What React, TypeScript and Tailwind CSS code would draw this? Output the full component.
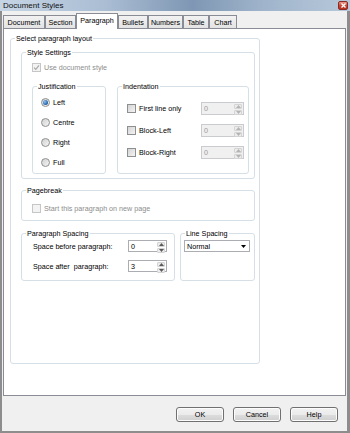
import type { ReactNode } from "react";

const Legend = ({ children }: { children: ReactNode }) => (
  <legend className="ml-[4px] px-[1px] leading-[9px] text-black">{children}</legend>
);

const CheckBox = ({ checked = false, disabled = false }: { checked?: boolean; disabled?: boolean }) => (
  <div
    className={`flex h-[9px] w-[9px] shrink-0 items-center justify-center border ${
      disabled
        ? "border-[#c6c6c6] bg-[#f3f3f3]"
        : "border-[#8e8f8f] bg-[linear-gradient(135deg,#d4d4d4,#f4f4f4)]"
    }`}
  >
    {checked && (
      <svg width="7" height="7" viewBox="0 0 7 7">
        <path d="M1 3.6 L2.8 5.4 L6 1.4" fill="none" stroke={disabled ? "#a8a8a8" : "#2a4a80"} strokeWidth="1.2" />
      </svg>
    )}
  </div>
);

const Radio = ({ checked = false }: { checked?: boolean }) => (
  <div className="flex h-[9px] w-[9px] shrink-0 items-center justify-center rounded-full border border-[#8e8f8f] bg-[linear-gradient(135deg,#d0d0d0,#f6f6f6)]">
    {checked && <div className="h-[5px] w-[5px] rounded-full bg-[radial-gradient(circle_at_35%_35%,#8fc0f0,#1f5fa8_70%)]" />}
  </div>
);

const Arrow = ({ up, color }: { up?: boolean; color: string }) => (
  <svg width="5" height="3" viewBox="0 0 5 3">
    <path d={up ? "M0 3 L2.5 0 L5 3 Z" : "M0 0 L5 0 L2.5 3 Z"} fill={color} />
  </svg>
);

const Spin = ({ value, disabled = false, className }: { value: string; disabled?: boolean; className: string }) => (
  <div
    className={`flex border ${className} ${
      disabled ? "border-[#c9cbcf] bg-[#f0f0f0] text-[#9a9a9a]" : "border-[#abadb3] bg-white text-black"
    }`}
  >
    <div className="flex flex-1 items-center pl-[2px]">{value}</div>
    <div className="m-[1px] flex w-[8px] flex-col gap-[1px]">
      <div className="flex flex-1 items-center justify-center rounded-[1px] border border-[#d4d4d4] bg-[#ececec]">
        <Arrow up color={disabled ? "#b4b4b4" : "#5a5a5a"} />
      </div>
      <div className="flex flex-1 items-center justify-center rounded-[1px] border border-[#d4d4d4] bg-[#ececec]">
        <Arrow color={disabled ? "#b4b4b4" : "#5a5a5a"} />
      </div>
    </div>
  </div>
);

const Button = ({ children }: { children: ReactNode }) => (
  <div className="flex h-[15px] w-[48px] items-center justify-center rounded-[3px] border border-[#707070] bg-[linear-gradient(#f2f2f2_0%,#ebebeb_50%,#dddddd_51%,#cfcfcf_100%)] text-black shadow-[inset_0_0_0_1px_#fcfcfc]">
    {children}
  </div>
);

const tabs = [
  { name: "Document", w: "w-[42px]" },
  { name: "Section", w: "w-[31px]" },
  { name: "Paragraph", w: "w-[42px]", active: true },
  { name: "Bullets", w: "w-[30px]" },
  { name: "Numbers", w: "w-[35px]" },
  { name: "Table", w: "w-[26px]" },
  { name: "Chart", w: "w-[28px]" },
];

export default function App() {
  return (
    <div className="flex h-[433px] w-[350px] flex-col overflow-hidden bg-[#f0f0f0] font-['Liberation_Sans',Arial,sans-serif] text-[7.2px] leading-[9px] text-black">
      {/* Title bar */}
      <div className="flex h-[11px] items-center justify-between bg-[linear-gradient(90deg,#c6d5e5_0%,#aabdd3_30%,#7f97b4_55%,#9fb4cb_75%,#b7c8da_100%)] pl-[3px] pr-[2px]">
        <span className="text-[8px] leading-[10px] text-[#111]">Document Styles</span>
        <div className="flex h-[9px] w-[10px] items-center justify-center rounded-[2px] border border-[#8a2a20] bg-[linear-gradient(#e89a8a,#c74a38_50%,#b8321f)]">
          <svg width="5" height="5" viewBox="0 0 5 5">
            <path d="M0.5 0.5 L4.5 4.5 M4.5 0.5 L0.5 4.5" stroke="#fff" strokeWidth="1.3" />
          </svg>
        </div>
      </div>

      <div className="flex flex-1 flex-col border-b-2 border-l-2 border-r-[3px] border-[#8d8d8d]">
        {/* Tabs */}
        <div className="flex h-[17px] items-end pl-[1px]">
          {tabs.map((t) =>
            t.active ? (
              <div
                key={t.name}
                className={`relative z-10 -mb-px flex h-[16px] ${t.w} items-start justify-center border border-b-0 border-[#898c95] bg-white pt-[2px]`}
              >
                {t.name}
              </div>
            ) : (
              <div
                key={t.name}
                className={`flex h-[13px] ${t.w} items-center justify-center border border-b-0 border-[#898c95] bg-[linear-gradient(#f2f2f2,#e3e3e3)]`}
              >
                {t.name}
              </div>
            )
          )}
        </div>

        {/* Panel */}
        <div className="mx-[1px] h-[368px] border border-[#898c95] bg-white">
          <fieldset className="ml-[6px] mt-[5px] h-[330px] w-[250px] rounded-[3px] border border-[#d5dfe5]">
            <Legend>Select paragraph layout</Legend>

            <fieldset className="ml-[10px] mt-[5px] h-[131px] w-[234px] rounded-[3px] border border-[#d5dfe5]">
              <Legend>Style Settings</Legend>
              <div className="ml-[10px] mt-[6px] flex h-[9px] items-center gap-[3px] text-[#8d8d8d]">
                <CheckBox checked disabled />
                <span>Use document style</span>
              </div>

              <div className="ml-[10px] mt-[10px] flex gap-[11px]">
                <fieldset className="h-[92px] w-[74px] rounded-[3px] border border-[#d5dfe5]">
                  <Legend>Justification</Legend>
                  <div className="ml-[8px] mt-[7px] flex flex-col gap-[11px]">
                    {["Left", "Centre", "Right", "Full"].map((j, i) => (
                      <div key={j} className="flex h-[9px] items-center gap-[3px]">
                        <Radio checked={i === 0} />
                        <span>{j}</span>
                      </div>
                    ))}
                  </div>
                </fieldset>

                <fieldset className="h-[92px] w-[132px] rounded-[3px] border border-[#d5dfe5]">
                  <Legend>Indentation</Legend>
                  <div className="mt-[11px] flex flex-col gap-[9px] pl-[9px] pr-[4px]">
                    {["First line only", "Block-Left", "Block-Right"].map((n) => (
                      <div key={n} className="flex h-[13px] items-center justify-between">
                        <div className="flex items-center gap-[3px]">
                          <CheckBox />
                          <span>{n}</span>
                        </div>
                        <Spin value="0" disabled className="h-[13px] w-[43px]" />
                      </div>
                    ))}
                  </div>
                </fieldset>
              </div>
            </fieldset>

            <fieldset className="ml-[10px] mt-[7px] h-[35px] w-[234px] rounded-[3px] border border-[#d5dfe5]">
              <Legend>Pagebreak</Legend>
              <div className="ml-[10px] mt-[9px] flex h-[9px] items-center gap-[3px] text-[#8d8d8d]">
                <CheckBox disabled />
                <span>Start this paragraph on new page</span>
              </div>
            </fieldset>

            <div className="ml-[10px] mt-[8px] flex gap-[5px]">
              <fieldset className="h-[52px] w-[154px] rounded-[3px] border border-[#d5dfe5]">
                <Legend>Paragraph Spacing</Legend>
                <div className="mt-[2px] flex flex-col gap-[8px] pl-[11px] pr-[7px]">
                  <div className="flex h-[12px] items-center justify-between">
                    <span>Space before paragraph:</span>
                    <Spin value="0" className="h-[12px] w-[39px]" />
                  </div>
                  <div className="flex h-[12px] items-center justify-between">
                    <span>Space after&nbsp; paragraph:</span>
                    <Spin value="3" className="h-[12px] w-[39px]" />
                  </div>
                </div>
              </fieldset>

              <fieldset className="h-[52px] w-[75px] rounded-[3px] border border-[#d5dfe5]">
                <Legend>Line Spacing</Legend>
                <div className="ml-[3px] mt-[2px] flex h-[12px] w-[66px] items-center justify-between border border-[#abadb3] bg-white pl-[2px] pr-[3px]">
                  <span>Normal</span>
                  <Arrow color="#000" />
                </div>
              </fieldset>
            </div>
          </fieldset>
        </div>

        {/* Buttons */}
        <div className="flex justify-end gap-[9px] pr-[9px] pt-[11px]">
          <Button>OK</Button>
          <Button>Cancel</Button>
          <Button>Help</Button>
        </div>
      </div>
    </div>
  );
}
